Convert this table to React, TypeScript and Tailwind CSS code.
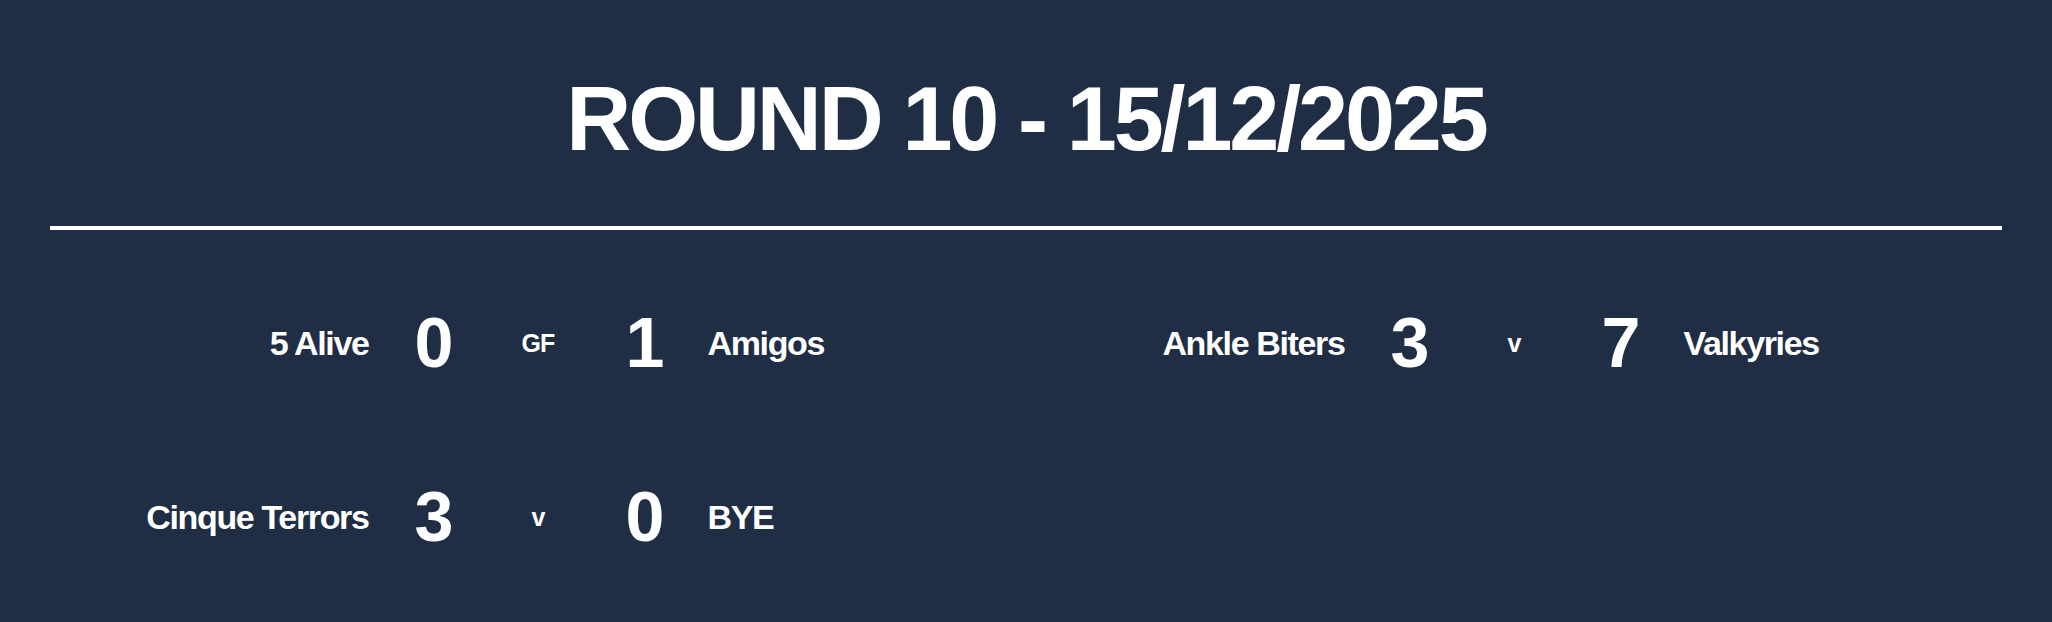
const matches = [
  { home: "5 Alive", homeScore: 0, sep: "GF", away: "Amigos", awayScore: 1 },
  { home: "Ankle Biters", homeScore: 3, sep: "v", away: "Valkyries", awayScore: 7 },
  { home: "Cinque Terrors", homeScore: 3, sep: "v", away: "BYE", awayScore: 0 },
];

const font = { fontFamily: '"Liberation Sans", Arial, sans-serif' };

const MatchRow = ({ m }: { m: (typeof matches)[number] }) => (
  <div className="grid h-[174px] grid-cols-[1fr_128px_83px_128px_1fr] items-center text-white">
    <div className="text-right text-[34px] font-bold leading-none tracking-[-0.04em]">{m.home}</div>
    <div className="text-center text-[70px] font-bold leading-none tracking-[-0.04em]">{m.homeScore}</div>
    <div className="text-center text-[25px] font-bold leading-none tracking-[-0.03em]">{m.sep}</div>
    <div className="text-center text-[70px] font-bold leading-none tracking-[-0.04em]">{m.awayScore}</div>
    <div className="text-left text-[34px] font-bold leading-none tracking-[-0.04em]">{m.away}</div>
  </div>
);

export default function App() {
  return (
    <div className="h-[622px] w-full overflow-hidden bg-[#1f2e44] px-[50px] pt-[74px]" style={font}>
      <h1 className="text-center text-[90px] font-bold leading-none tracking-[-0.035em] text-white">
        ROUND 10 - 15/12/2025
      </h1>
      <div className="mt-[62px] h-[4px] w-full bg-white" />
      <div className="mt-[26px] grid grid-cols-2">
        {matches.map((m, i) => (
          <MatchRow key={i} m={m} />
        ))}
      </div>
    </div>
  );
}
